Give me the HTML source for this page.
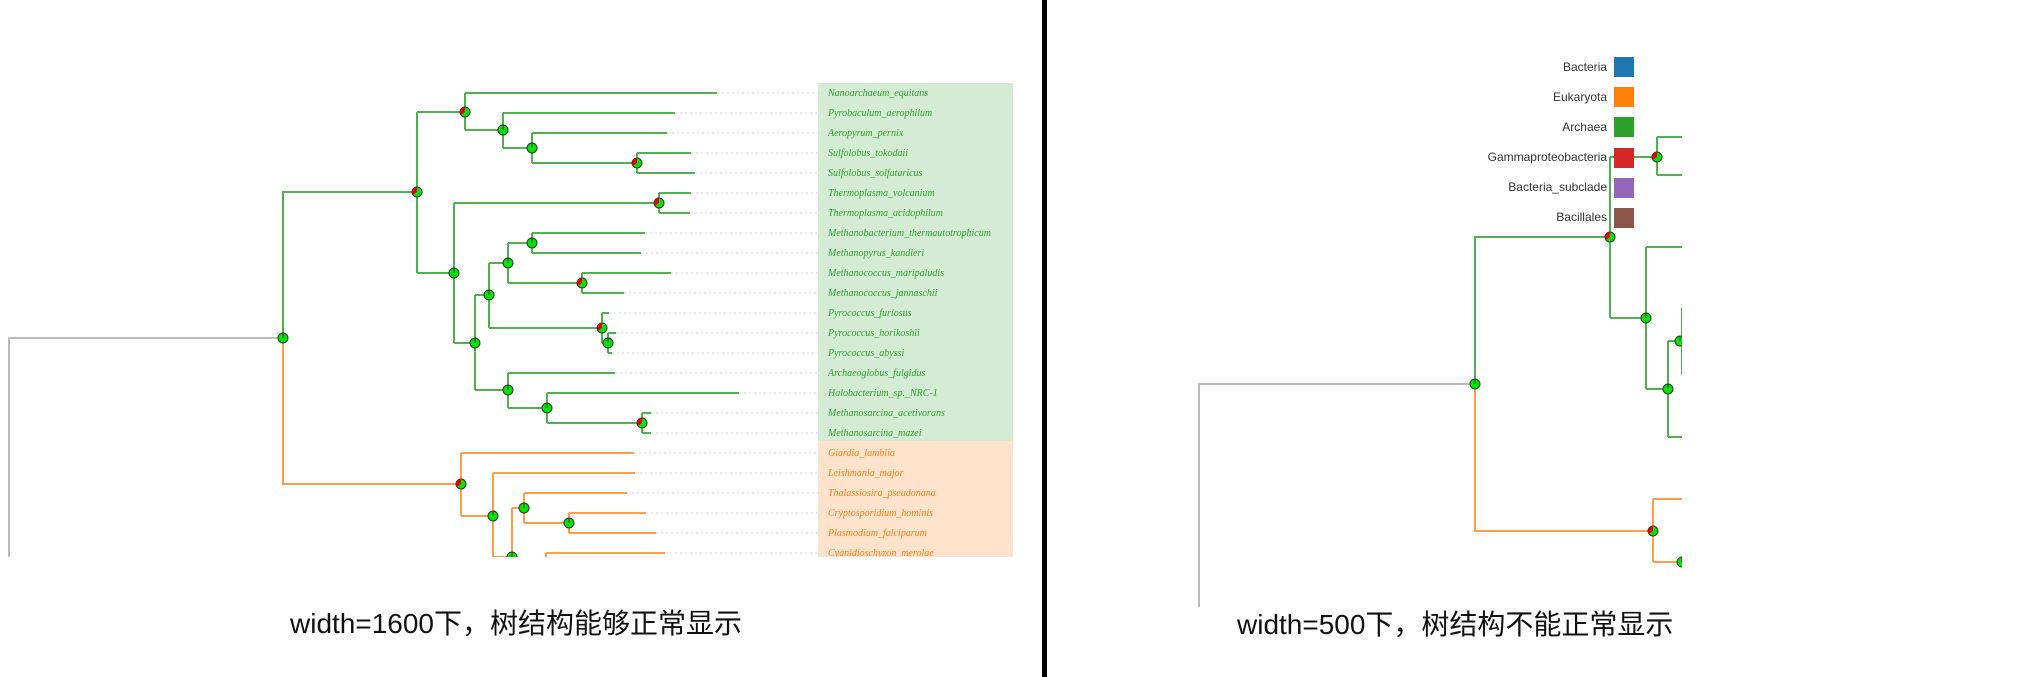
<!DOCTYPE html>
<html><head><meta charset="utf-8"><style>
html,body{margin:0;padding:0;background:#fff;width:2023px;height:677px;overflow:hidden}
svg{display:block}
.g{stroke:#52b052;stroke-width:2;fill:none}
.o{stroke:#ff9d4a;stroke-width:2;fill:none}
.gr{stroke:#bbb;stroke-width:2;fill:none}
.d{stroke:#e4e4e4;stroke-width:1.5;stroke-dasharray:2,3;fill:none}
.lg{font:italic 10px "Liberation Serif",serif;fill:#2ca02c}
.lo{font:italic 10px "Liberation Serif",serif;fill:#ff7f0e}
.leg{font:12px "Liberation Sans",sans-serif;fill:#333;text-anchor:end}
.cap{font:28px "Liberation Sans","Noto Sans CJK SC",sans-serif;fill:#111}
</style></head><body>
<svg width="2023" height="677" xmlns="http://www.w3.org/2000/svg">
<defs>
<clipPath id="cl"><rect x="0" y="0" width="1020" height="557"/></clipPath>
<clipPath id="cr"><rect x="1050" y="0" width="632" height="607"/></clipPath>
<g id="n"><circle r="5" fill="#00e600" stroke="#333" stroke-width="1"/><path d="M0 0V-5" stroke="#333" stroke-width="1"/></g>
<g id="nr"><circle r="5" fill="#00e600" stroke="#333" stroke-width="1"/><path d="M0 0V-5A5 5 0 0 0 -4.1 2.8Z" fill="#e00000"/></g>
</defs>
<g clip-path="url(#cl)">
<rect x="818" y="83" width="195" height="358" fill="#d4ecd4"/>
<rect x="818" y="441" width="195" height="130" fill="#ffe3cc"/>
<g class="d">
<path d="M717 93H822M675 113H822M667 133H822M691 153H822M695 173H822M691 193H822M690 213H822M645 233H822M641 253H822M671 273H822M624 293H822M609 313H822M616 333H822M612 353H822M615 373H822M739 393H822M651 413H822M651 433H822M634 453H822M635 473H822M627 493H822M646 513H822M656 533H822M665 553H822"/>
</g>
<path class="gr" d="M9 557V338H283"/>
<path class="g" d="M283 338V192H417M417 112V273
M417 112H465M465 93V130M465 93H717M465 130H503M503 113V148M503 113H675M503 148H532M532 133V163M532 133H667M532 163H637M637 153V173M637 153H691M637 173H695
M417 273H454M454 203V343M454 203H659M659 193V213M659 193H691M659 213H690
M454 343H475M475 295V390M475 295H489M489 263V328M489 263H508M508 243V283M508 243H532M532 233V253M532 233H645M532 253H641M508 283H582M582 273V293M582 273H671M582 293H624
M489 328H602M602 313V343M602 313H609M602 343H608M608 333V353M608 333H616M608 353H612
M475 390H508M508 373V408M508 373H615M508 408H547M547 393V423M547 393H739M547 423H642M642 413V433M642 413H651M642 433H651"/>
<path class="o" d="M283 338V484H461M461 453V516M461 453H634M461 516H493M493 473V570M493 473H635M493 557H512M512 508V570M512 508H524M524 493V523M524 493H627M524 523H569M569 513V533M569 513H646M569 533H656M546 553V570M546 553H665"/>
<g>
<use href="#n" x="283" y="338"/><use href="#nr" x="417" y="192"/><use href="#nr" x="465" y="112"/><use href="#n" x="503" y="130"/><use href="#n" x="532" y="148"/><use href="#nr" x="637" y="163"/>
<use href="#n" x="454" y="273"/><use href="#nr" x="659" y="203"/><use href="#n" x="475" y="343"/><use href="#n" x="489" y="295"/><use href="#n" x="508" y="263"/><use href="#n" x="532" y="243"/><use href="#nr" x="582" y="283"/><use href="#nr" x="602" y="328"/><use href="#n" x="608" y="343"/>
<use href="#n" x="508" y="390"/><use href="#n" x="547" y="408"/><use href="#nr" x="642" y="423"/>
<use href="#nr" x="461" y="484"/><use href="#n" x="493" y="516"/><use href="#n" x="524" y="508"/><use href="#n" x="569" y="523"/><use href="#n" x="512" y="557"/>
</g>
<g class="lg">
<text x="828" y="96">Nanoarchaeum_equitans</text><text x="828" y="116">Pyrobaculum_aerophilum</text><text x="828" y="136">Aeropyrum_pernix</text><text x="828" y="156">Sulfolobus_tokodaii</text><text x="828" y="176">Sulfolobus_solfataricus</text><text x="828" y="196">Thermoplasma_volcanium</text><text x="828" y="216">Thermoplasma_acidophilum</text><text x="828" y="236">Methanobacterium_thermautotrophicum</text><text x="828" y="256">Methanopyrus_kandleri</text><text x="828" y="276">Methanococcus_maripaludis</text><text x="828" y="296">Methanococcus_jannaschii</text><text x="828" y="316">Pyrococcus_furiosus</text><text x="828" y="336">Pyrococcus_horikoshii</text><text x="828" y="356">Pyrococcus_abyssi</text><text x="828" y="376">Archaeoglobus_fulgidus</text><text x="828" y="396">Halobacterium_sp._NRC-1</text><text x="828" y="416">Methanosarcina_acetivorans</text><text x="828" y="436">Methanosarcina_mazei</text>
</g>
<g class="lo">
<text x="828" y="456">Giardia_lamblia</text><text x="828" y="476">Leishmania_major</text><text x="828" y="496">Thalassiosira_pseudonana</text><text x="828" y="516">Cryptosporidium_hominis</text><text x="828" y="536">Plasmodium_falciparum</text><text x="828" y="556">Cyanidioschyzon_merolae</text>
</g>
</g>
<text class="cap" x="290" y="633">width=1600下，树结构能够正常显示</text>
<rect x="1042" y="0" width="5" height="677" fill="#000"/>
<g clip-path="url(#cr)">
<path class="gr" d="M1199 607V384H1475"/>
<path class="g" d="M1475 384V237H1610M1610 157V318M1610 157H1657M1657 137V175M1657 137H1690M1657 175H1690M1610 318H1646M1646 247V389M1646 247H1690M1646 389H1668M1668 341V437M1668 437H1690M1668 341H1680M1682 308V374"/>
<path class="o" d="M1475 384V531H1653M1653 499V562M1653 499H1690M1653 562H1690"/>
<use href="#nr" x="1610" y="237"/><use href="#nr" x="1657" y="157"/><use href="#n" x="1646" y="318"/><use href="#n" x="1668" y="389"/><use href="#n" x="1680" y="341"/><use href="#n" x="1475" y="384"/><use href="#nr" x="1653" y="531"/><use href="#n" x="1682" y="562"/>
</g>
<rect x="1614" y="57" width="20" height="20" fill="#1f77b4"/>
<rect x="1614" y="87" width="20" height="20" fill="#ff7f0e"/>
<rect x="1614" y="117" width="20" height="20" fill="#2ca02c"/>
<rect x="1614" y="148" width="20" height="20" fill="#d62728"/>
<rect x="1614" y="178" width="20" height="20" fill="#9467bd"/>
<rect x="1614" y="208" width="20" height="20" fill="#8c564b"/>
<g class="leg">
<text x="1607" y="71">Bacteria</text><text x="1607" y="101">Eukaryota</text><text x="1607" y="131">Archaea</text><text x="1607" y="161">Gammaproteobacteria</text><text x="1607" y="191">Bacteria_subclade</text><text x="1607" y="221">Bacillales</text>
</g>
<text class="cap" x="1237" y="634">width=500下，树结构不能正常显示</text>
</svg>
</body></html>
